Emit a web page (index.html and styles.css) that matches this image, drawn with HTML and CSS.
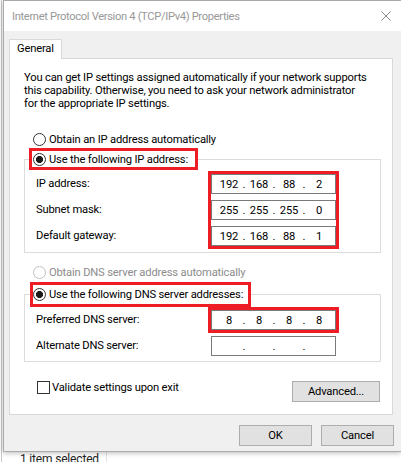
FILE: index.html
```html
<!DOCTYPE html>
<html lang="en">
<head>
<meta charset="utf-8">
<title>Internet Protocol Version 4 (TCP/IPv4) Properties</title>
<link rel="stylesheet" href="styles.css">
</head>
<body>
<div class="screen">
  <div class="dialog">
    <div class="titlebar">
      <span class="title">Internet Protocol Version 4 (TCP/IPv4) Properties</span>
      <svg class="close" width="10" height="10" viewBox="0 0 10 10"><path d="M0.5 0.5 L9.5 9.5 M9.5 0.5 L0.5 9.5" stroke="#8a8a8a" stroke-width="1" fill="none"/></svg>
    </div>
    <div class="client">
      <div class="tabs"><div class="tab">General</div></div>
      <div class="panel">
        <p class="desc">You can get IP settings assigned automatically if your network supports<br>this capability. Otherwise, you need to ask your network administrator<br>for the appropriate IP settings.</p>

        <div class="radio-row"><span class="radio"></span>Obtain an IP address automatically</div>

        <fieldset class="group group-ip">
          <legend class="legend legend-ip mark"><span class="radio checked"></span>Use the following IP address:</legend>
          <div class="cols">
            <div class="labels">
              <div class="lbl">IP address:</div>
              <div class="lbl">Subnet mask:</div>
              <div class="lbl">Default gateway:</div>
            </div>
            <div class="fields mark">
              <div class="ip"><span class="oct">192</span><span class="dot">.</span><span class="oct">168</span><span class="dot">.</span><span class="oct">88</span><span class="dot">.</span><span class="oct">2</span></div>
              <div class="ip"><span class="oct">255</span><span class="dot">.</span><span class="oct">255</span><span class="dot">.</span><span class="oct">255</span><span class="dot">.</span><span class="oct">0</span></div>
              <div class="ip"><span class="oct">192</span><span class="dot">.</span><span class="oct">168</span><span class="dot">.</span><span class="oct">88</span><span class="dot">.</span><span class="oct">1</span></div>
            </div>
          </div>
        </fieldset>

        <div class="radio-row radio-dns disabled"><span class="radio"></span>Obtain DNS server address automatically</div>

        <fieldset class="group group-dns">
          <legend class="legend legend-dns mark"><span class="radio checked"></span>Use the following DNS server addresses:</legend>
          <div class="cols">
            <div class="labels">
              <div class="lbl">Preferred DNS server:</div>
              <div class="lbl">Alternate DNS server:</div>
            </div>
            <div class="fields">
              <div class="ip mark"><span class="oct">8</span><span class="dot">.</span><span class="oct">8</span><span class="dot">.</span><span class="oct">8</span><span class="dot">.</span><span class="oct">8</span></div>
              <div class="ip"><span class="oct"></span><span class="dot">.</span><span class="oct"></span><span class="dot">.</span><span class="oct"></span><span class="dot">.</span><span class="oct"></span></div>
            </div>
          </div>
        </fieldset>

        <div class="check-row">
          <div class="check-label"><span class="checkbox"></span>Validate settings upon exit</div>
          <div class="btn btn-adv">Advanced...</div>
        </div>
      </div>
      <div class="footer">
        <div class="btn btn-foot">OK</div>
        <div class="btn btn-foot">Cancel</div>
      </div>
    </div>
  </div>
  <div class="status">1 item selected</div>
</div>
</body>
</html>
```

FILE: styles.css
```css
* { box-sizing: border-box; }
html, body { margin: 0; padding: 0; }
body {
  width: 401px;
  height: 462px;
  overflow: hidden;
  background: #ffffff;
  font-family: Roboto, "Liberation Sans", sans-serif;
  font-size: 11.2px;
  letter-spacing: -0.18px;
  color: #000;
}
.screen {
  height: 462px;
  padding-left: 3px;
  background: linear-gradient(to right, #ffffff 0, #ffffff 1px, #c9c9c9 1px, #c9c9c9 2px, #ffffff 2px);
}
.dialog {
  width: 398px;
  border: 1px solid #aaaaaa;
  border-right: none;
  background: #f0f0f0;
  box-shadow: 0 1px 5px rgba(0, 0, 0, 0.28);
  position: relative;
  z-index: 1;
}
.titlebar {
  height: 30px;
  background: #ffffff;
  display: flex;
  align-items: center;
  justify-content: space-between;
  padding: 0 10px 0 8px;
}
.title { color: #999999; font-size: 11.2px; letter-spacing: -0.35px; }
.close { display: block; }
.client { padding: 8px 8px 5px 5px; }
.tabs { display: flex; }
.tab {
  width: 53px;
  height: 20px;
  border: 1px solid #d9d9d9;
  border-bottom: none;
  background: #ffffff;
  margin-bottom: -1px;
  position: relative;
  z-index: 1;
  padding-left: 7px;
  line-height: 18px;
}
.panel {
  border: 1px solid #d9d9d9;
  background: #ffffff;
  padding: 0 11px 12px 14px;
}
.desc { margin: 12px 0 0; line-height: 13px; }
.radio-row {
  display: flex;
  align-items: center;
  height: 20px;
  margin-top: 19px;
  padding-left: 9px;
}
.radio-dns { margin-top: 9px; }
.disabled { color: #8c8c8c; }
.radio {
  width: 13px;
  height: 13px;
  border: 1px solid #333333;
  border-radius: 50%;
  background: #ffffff;
  margin-right: 3px;
  flex: none;
}
.disabled .radio { border-color: #c0c0c0; }
.radio.checked { background: radial-gradient(circle, #1a1a1a 0, #1a1a1a 3.3px, #ffffff 3.8px); }
.group {
  margin: 0;
  min-width: 0;
  border: 1px solid #dcdcdc;
}
.group-ip { margin-top: 2px; padding: 7px 44px 6px 11px; }
.group-dns { margin-top: 3px; padding: 6px 44px 5px 11px; }
.legend {
  display: flex;
  align-items: center;
  background: #ffffff;
}
.legend-ip { margin-left: -4px; padding: 0 7px 0 1px; height: 16px; }
.legend-dns { margin-left: -3px; padding: 0 5px 0 0; height: 19px; }
.mark { outline: 3px solid #ee1c24; }
.cols { display: flex; }
.labels { width: 175px; display: flex; flex-direction: column; gap: 6px; }
.lbl { height: 20px; line-height: 20px; }
.fields { width: 125px; display: flex; flex-direction: column; gap: 6px; }
.ip {
  height: 20px;
  border: 1px solid #7a7a7a;
  display: flex;
  align-items: center;
  padding-left: 4px;
  background: #ffffff;
}
.oct { width: 26px; text-align: center; }
.dot { width: 4px; text-align: center; }
.check-row {
  margin-top: 19px;
  height: 21px;
  display: flex;
  align-items: flex-start;
  justify-content: space-between;
}
.check-label { display: flex; align-items: center; height: 13px; padding-left: 13px; }
.checkbox {
  width: 13px;
  height: 13px;
  border: 1px solid #333333;
  background: #ffffff;
  margin-right: 2px;
}
.btn {
  height: 21px;
  border: 1px solid #adadad;
  background: #e1e1e1;
  display: flex;
  align-items: center;
  justify-content: center;
}
.btn-adv { width: 88px; margin-right: 1px; }
.footer {
  display: flex;
  justify-content: flex-end;
  gap: 9px;
  margin-top: 10px;
  margin-right: -1px;
}
.btn-foot { width: 73px; }
.status {
  width: 104px;
  padding-left: 17px;
  border-right: 1px solid #e3e3e3;
  line-height: 15px;
  font-size: 12px;
  color: #1e1e1e;
}
```
